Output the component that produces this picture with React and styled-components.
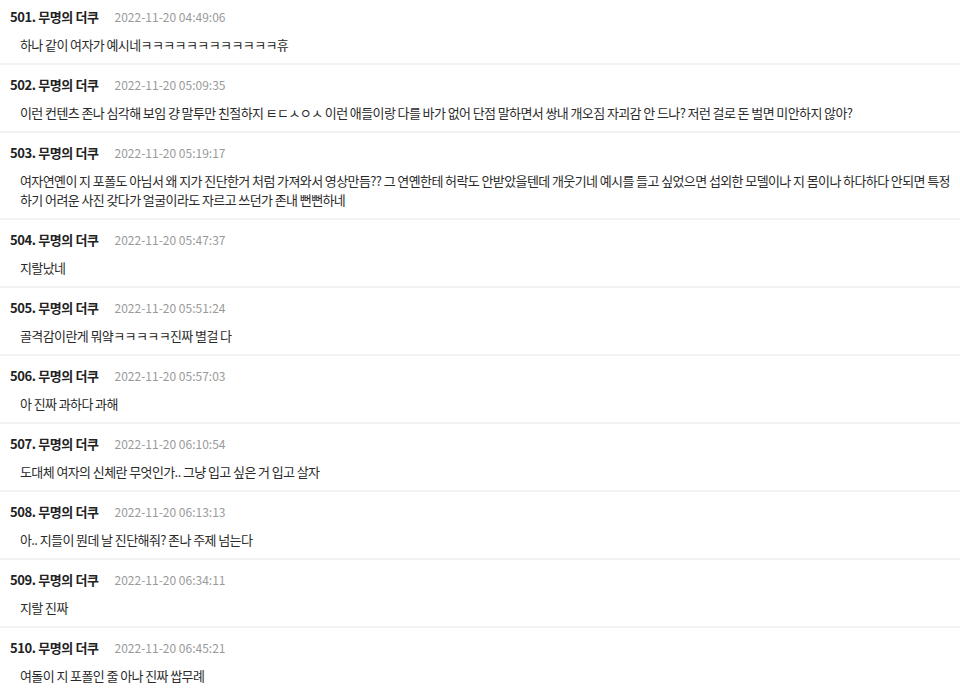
import React from "react";
import styled, { createGlobalStyle } from "styled-components";

const GlobalStyle = createGlobalStyle`
  body {
    margin: 0;
    background: #fff;
    font-family: "Noto Sans CJK KR", "Noto Sans", sans-serif;
  }
`;

const List = styled.div`
  margin-top: -3px;
`;

const Comment = styled.div`
  padding: 10px 4px 9px 10px;
  border-bottom: 2px solid #f2f2f2;
`;

const Header = styled.div`
  display: flex;
  align-items: center;
  height: 18px;
`;

const Name = styled.span`
  font-size: 13px;
  font-weight: 700;
  letter-spacing: -0.4px;
  color: #222;
`;

const Date = styled.span`
  margin-left: 16px;
  font-size: 12px;
  color: #9a9a9a;
`;

const Body = styled.div`
  margin-top: 10px;
  padding-left: 10px;
  font-size: 13px;
  line-height: 19px;
  letter-spacing: -0.6px;
  word-break: keep-all;
  color: #2a2a2a;
`;

const comments = [
  { no: 501, date: "2022-11-20 04:49:06", text: "하나 같이 여자가 예시네ㅋㅋㅋㅋㅋㅋㅋㅋㅋㅋㅋㅋ휴" },
  {
    no: 502,
    date: "2022-11-20 05:09:35",
    text: "이런 컨텐츠 존나 심각해 보임 걍 말투만 친절하지 ㅌㄷㅅㅇㅅ 이런 애들이랑 다를 바가 없어 단점 말하면서 쌍내 개오짐 자괴감 안 드나? 저런 걸로 돈 벌면 미안하지 않아?",
  },
  {
    no: 503,
    date: "2022-11-20 05:19:17",
    text: "여자연옌이 지 포폴도 아님서 왜 지가 진단한거 처럼 가져와서 영상만듬?? 그 연옌한테 허락도 안받았을텐데 개웃기네 예시를 들고 싶었으면 섭외한 모델이나 지 몸이나 하다하다 안되면 특정 하기 어려운 사진 갖다가 얼굴이라도 자르고 쓰던가 존내 뻔뻔하네",
  },
  { no: 504, date: "2022-11-20 05:47:37", text: "지랄났네" },
  { no: 505, date: "2022-11-20 05:51:24", text: "골격감이란게 뭐얔ㅋㅋㅋㅋㅋ진짜 별걸 다" },
  { no: 506, date: "2022-11-20 05:57:03", text: "아 진짜 과하다 과해" },
  { no: 507, date: "2022-11-20 06:10:54", text: "도대체 여자의 신체란 무엇인가.. 그냥 입고 싶은 거 입고 살자" },
  { no: 508, date: "2022-11-20 06:13:13", text: "아.. 지들이 뭔데 날 진단해줘? 존나 주제 넘는다" },
  { no: 509, date: "2022-11-20 06:34:11", text: "지랄 진짜" },
  { no: 510, date: "2022-11-20 06:45:21", text: "여돌이 지 포폴인 줄 아나 진짜 쌉무례" },
];

function App() {
  return (
    <>
      <GlobalStyle />
      <List>
        {comments.map((c) => (
          <Comment key={c.no}>
            <Header>
              <Name>{c.no}. 무명의 더쿠</Name>
              <Date>{c.date}</Date>
            </Header>
            <Body>{c.text}</Body>
          </Comment>
        ))}
      </List>
    </>
  );
}

export default App;
